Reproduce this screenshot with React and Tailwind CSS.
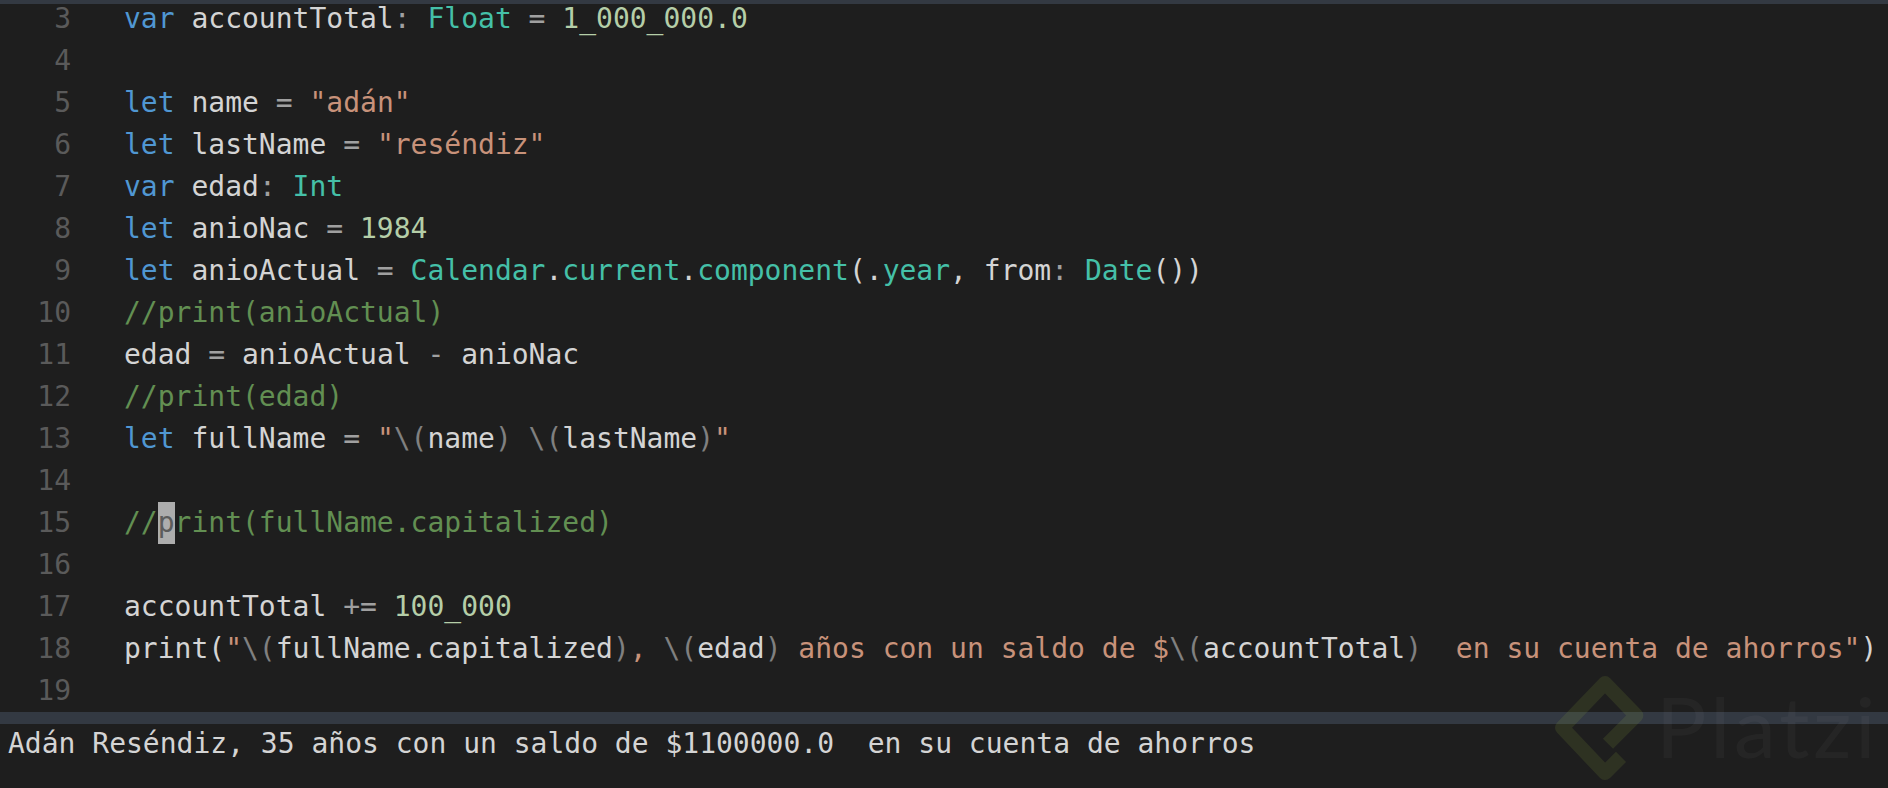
const K = "text-[#5097d2]";
const T = "text-[#45c0a8]";
const N = "text-[#b5cea8]";
const S = "text-[#c8927a]";
const C = "text-[#628f52]";
const W = "text-[#d4d4d4]";
const O = "text-[#a0a0a0]";
const G = "text-[#808080]";

const lines = [
  [3, [[K, "var"], [W, " accountTotal"], [O, ":"], [W, " "], [T, "Float"], [O, " = "], [N, "1_000_000.0"]]],
  [4, []],
  [5, [[K, "let"], [W, " name"], [O, " = "], [S, "\"adán\""]]],
  [6, [[K, "let"], [W, " lastName"], [O, " = "], [S, "\"reséndiz\""]]],
  [7, [[K, "var"], [W, " edad"], [O, ":"], [W, " "], [T, "Int"]]],
  [8, [[K, "let"], [W, " anioNac"], [O, " = "], [N, "1984"]]],
  [9, [[K, "let"], [W, " anioActual"], [O, " = "], [T, "Calendar"], [W, "."], [T, "current"], [W, "."], [T, "component"], [W, "(."], [T, "year"], [W, ", from"], [O, ":"], [W, " "], [T, "Date"], [W, "())"]]],
  [10, [[C, "//print(anioActual)"]]],
  [11, [[W, "edad"], [O, " = "], [W, "anioActual"], [O, " - "], [W, "anioNac"]]],
  [12, [[C, "//print(edad)"]]],
  [13, [[K, "let"], [W, " fullName"], [O, " = "], [S, "\""], [G, "\\("], [W, "name"], [G, ")"], [S, " "], [G, "\\("], [W, "lastName"], [G, ")"], [S, "\""]]],
  [14, []],
  [15, "cursor"],
  [16, []],
  [17, [[W, "accountTotal"], [O, " += "], [N, "100_000"]]],
  [18, [[W, "print("], [S, "\""], [G, "\\("], [W, "fullName.capitalized"], [G, ")"], [S, ", "], [G, "\\("], [W, "edad"], [G, ")"], [S, " años con un saldo de $"], [G, "\\("], [W, "accountTotal"], [G, ")"], [S, "  en su cuenta de ahorros\""], [W, ")"]]],
  [19, []],
];

function Code({ parts }) {
  if (parts === "cursor") {
    return (
      <span className={C}>
        //<span className="inline-block h-[42px] bg-[#adadad] text-[#5c5c5c]">p</span>rint(fullName.capitalized)
      </span>
    );
  }
  return parts.map(([cls, text], i) => (
    <span key={i} className={cls}>{text}</span>
  ));
}

export default function App() {
  return (
    <div className="relative flex h-[788px] w-full flex-col overflow-hidden bg-[#1e1e1e] font-['DejaVu_Sans_Mono',monospace] text-[28px] leading-[42px]">
      <div className="h-1 shrink-0 bg-[#333942]" />
      <div className="min-h-0 flex-1">
        {lines.map(([n, parts]) => (
          <div
            key={n}
            className={n === 3 ? "flex h-[36px] whitespace-pre leading-[30px]" : "flex h-[42px] whitespace-pre"}
          >
            <span className="w-[71px] shrink-0 text-right text-[#5a5a5a]">{n}</span>
            <span className="pl-[53px]"><Code parts={parts} /></span>
          </div>
        ))}
      </div>
      <div className="h-3 shrink-0 bg-[#333942]" />
      <div className="h-16 shrink-0 whitespace-pre pl-2 leading-[40px] text-[#d4d4d4]">
        Adán Reséndiz, 35 años con un saldo de $1100000.0  en su cuenta de ahorros
      </div>
      <div className="pointer-events-none absolute left-[1555px] top-[676px] flex items-center">
        <svg width="90" height="104" viewBox="0 0 90 104" fill="none" className="opacity-[0.13]">
          <path
            d="M53 67.7 L81.2 39.5 L50 7.15 L7.15 51.7 L50 96.85 L66 80.9"
            stroke="#98b53f"
            strokeWidth="14.3"
            strokeLinejoin="round"
          />
        </svg>
        <span className="-mt-1 ml-[11px] font-['Lato',sans-serif] text-[84px] leading-none tracking-[4px] text-white opacity-[0.03]">Platzi</span>
      </div>
    </div>
  );
}
